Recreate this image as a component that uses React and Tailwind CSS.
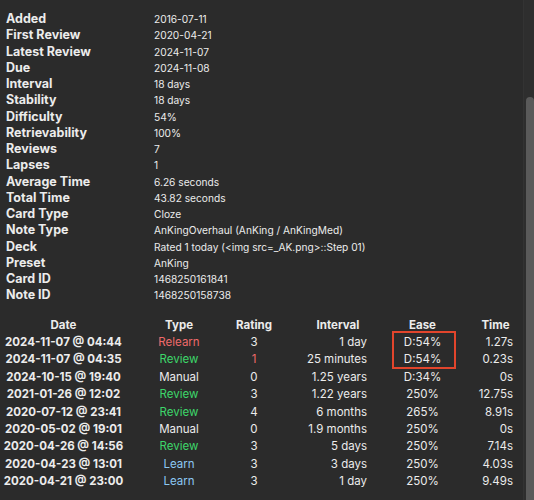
import React from "react";

const info = [
  ["Added", "2016-07-11"],
  ["First Review", "2020-04-21"],
  ["Latest Review", "2024-11-07"],
  ["Due", "2024-11-08"],
  ["Interval", "18 days"],
  ["Stability", "18 days"],
  ["Difficulty", "54%"],
  ["Retrievability", "100%"],
  ["Reviews", "7"],
  ["Lapses", "1"],
  ["Average Time", "6.26 seconds"],
  ["Total Time", "43.82 seconds"],
  ["Card Type", "Cloze"],
  ["Note Type", "AnKingOverhaul (AnKing / AnKingMed)"],
  ["Deck", "Rated 1 today (<img src=_AK.png>::Step 01)"],
  ["Preset", "AnKing"],
  ["Card ID", "1468250161841"],
  ["Note ID", "1468250158738"],
];

const typeColor = {
  Relearn: "text-[#ee6a6a]",
  Review: "text-[#3dd66a]",
  Manual: "text-[#ececec]",
  Learn: "text-[#8cc8f2]",
};

const revlog = [
  ["2024-11-07 @ 04:44", "Relearn", "3", "1 day", "D:54%", "1.27s"],
  ["2024-11-07 @ 04:35", "Review", "1", "25 minutes", "D:54%", "0.23s"],
  ["2024-10-15 @ 19:40", "Manual", "0", "1.25 years", "D:34%", "0s"],
  ["2021-01-26 @ 12:02", "Review", "3", "1.22 years", "250%", "12.75s"],
  ["2020-07-12 @ 23:41", "Review", "4", "6 months", "265%", "8.91s"],
  ["2020-05-02 @ 19:01", "Manual", "0", "1.9 months", "250%", "0s"],
  ["2020-04-26 @ 14:56", "Review", "3", "5 days", "250%", "7.14s"],
  ["2020-04-23 @ 13:01", "Learn", "3", "3 days", "250%", "4.03s"],
  ["2020-04-21 @ 23:00", "Learn", "3", "1 day", "250%", "9.49s"],
];

const grid =
  "grid grid-cols-[117px_40px_36px_58px_37px_35px] gap-x-[37px] items-center h-[17.4px]";

export default function App() {
  return (
    <div
      className="relative w-[534px] h-[500px] overflow-hidden bg-[#2b2b2b] text-[#ececec]"
      style={{ fontFamily: "Inter, 'Liberation Sans', sans-serif" }}
    >
      {/* card stats */}
      <div className="pt-[11px] pl-[6px] grid grid-cols-[148px_1fr]">
        {info.map(([label, value]) => (
          <React.Fragment key={label}>
            <div className="text-[12.5px] font-bold leading-[16.25px] whitespace-nowrap">
              {label}
            </div>
            <div className="text-[10.2px] leading-[16.25px] whitespace-nowrap">
              {value}
            </div>
          </React.Fragment>
        ))}
      </div>

      {/* review history */}
      <div className="mt-[13px] pl-[5px] text-[11.5px]">
        <div className={grid + " font-bold"}>
          <div className="flex justify-center whitespace-nowrap">Date</div>
          <div className="flex justify-center whitespace-nowrap">Type</div>
          <div className="flex justify-center whitespace-nowrap">Rating</div>
          <div className="flex justify-center whitespace-nowrap">Interval</div>
          <div className="flex justify-center whitespace-nowrap">Ease</div>
          <div className="flex justify-center whitespace-nowrap">Time</div>
        </div>
        <div className="relative">
          {revlog.map(([date, type, rating, ivl, ease, time]) => (
            <div key={date + type} className={grid}>
              <div className="flex justify-center whitespace-nowrap font-bold">
                {date}
              </div>
              <div
                className={
                  "flex justify-center whitespace-nowrap " + typeColor[type]
                }
              >
                {type}
              </div>
              <div
                className={
                  "flex justify-center whitespace-nowrap " +
                  (rating === "1" ? "text-[#ee6a6a]" : "")
                }
              >
                {rating}
              </div>
              <div className="flex justify-end whitespace-nowrap">{ivl}</div>
              <div className="flex justify-center whitespace-nowrap">{ease}</div>
              <div className="flex justify-end whitespace-nowrap">{time}</div>
            </div>
          ))}
          {/* highlight box */}
          <div className="absolute left-[387px] top-[-3px] w-[64px] h-[38px] border-2 border-[#e2452c]" />
        </div>
      </div>

      {/* scrollbar */}
      <div className="absolute right-0 top-0 w-[11px] h-full bg-[#2e2e2e] border-l border-[#333333]">
        <div className="absolute left-[2px] top-[97px] w-[8px] h-[420px] rounded-full bg-[#5a5a5a]" />
      </div>
    </div>
  );
}
